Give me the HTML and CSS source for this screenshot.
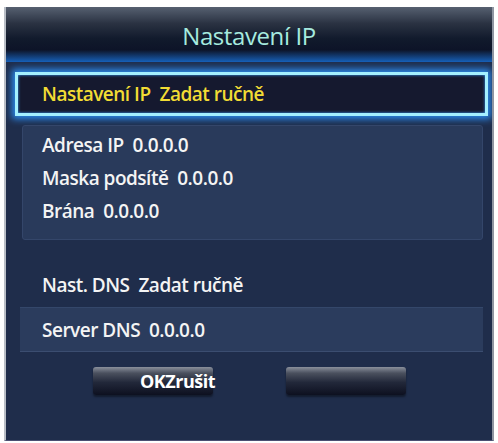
FILE: index.html
```html
<!DOCTYPE html>
<html lang="cs">
<head>
    <meta charset="UTF-8">
    <title>Nastavení IP</title>
    <link rel="stylesheet" href="styles.css">
</head>
<body>
    <div class="dialog">
        <!-- Title bar -->
        <div class="header">Nastavení IP</div>

        <!-- Focused row -->
        <div class="selected">Nastavení IP&nbsp; Zadat ručně</div>

        <!-- Manual IP values -->
        <div class="group">
            <div class="row">Adresa IP&nbsp; 0.0.0.0</div>
            <div class="row">Maska podsítě&nbsp; 0.0.0.0</div>
            <div class="row">Brána&nbsp; 0.0.0.0</div>
        </div>

        <div class="row dns-row">Nast. DNS&nbsp; Zadat ručně</div>
        <div class="server">Server DNS&nbsp; 0.0.0.0</div>

        <!-- Buttons -->
        <div class="buttons">
            <div class="btn btn-ok">OKZrušit</div>
            <div class="btn"></div>
        </div>
    </div>
</body>
</html>
```

FILE: styles.css
```css
body {
    margin: 0;
    background: #ffffff;
    font-family: "Open Sans", "Liberation Sans", sans-serif;
}
.dialog {
    box-sizing: border-box;
    width: 490px;
    height: 434px;
    margin: 7px 0 0 4px;
    border-left: 2px solid #b9bec6;
    border-right: 2px solid #8f96a2;
    border-bottom: 1px solid #4a4f72;
    background: #1f2d4b;
    overflow: hidden;
}
.header {
    height: 55px;
    line-height: 58px;
    text-align: center;
    font-size: 24px;
    letter-spacing: -0.4px;
    color: #a6eadf;
    background: linear-gradient(to bottom, #566070 0%, #2a3242 30%, #111a2c 58%, #0d1428 78%, #1760b8 100%);
}
.selected {
    margin: 10px 4px 0 9px;
    height: 38px;
    line-height: 38px;
    padding-left: 24px;
    border: 3px solid #a4f0ff;
    background: #15192f;
    box-shadow: 0 0 7px 3px #2b8cf0, inset 0 0 3px #3aa0ff;
    color: #f2dc34;
    font-size: 19px;
    font-weight: 600;
    letter-spacing: -0.5px;
}
.group {
    margin: 9px 9px 0 16px;
    padding: 3px 0 11px;
    background: #293a5b;
    border: 1px solid #34466a;
    border-radius: 3px;
}
.row {
    height: 33px;
    line-height: 33px;
    padding-left: 19px;
    color: #f4f4f4;
    font-size: 19px;
    font-weight: 600;
    letter-spacing: -0.5px;
}
.dns-row {
    margin-top: 28px;
    height: 34px;
    line-height: 34px;
    padding-left: 36px;
}
.server {
    margin: 5px 9px 0 14px;
    height: 45px;
    line-height: 45px;
    padding-left: 22px;
    background: #2b3c5d;
    border-top: 1px solid #34476a;
    border-bottom: 1px solid #3b4d70;
    box-sizing: border-box;
    color: #f4f4f4;
    font-size: 19px;
    font-weight: 600;
    letter-spacing: -0.5px;
}
.buttons {
    display: flex;
    gap: 73px;
    margin: 15px 0 0 87px;
}
.btn {
    width: 120px;
    height: 28px;
    border-radius: 3px;
    background: linear-gradient(to bottom, #8a909c 0%, #4a505e 22%, #22283a 55%, #0d1020 100%);
    box-shadow: 0 2px 2px rgba(0, 0, 0, 0.4);
}
.btn-ok {
    box-sizing: border-box;
    padding-left: 47px;
    line-height: 28px;
    white-space: nowrap;
    color: #ffffff;
    font-size: 18px;
    font-weight: 700;
    letter-spacing: -0.5px;
}
```
